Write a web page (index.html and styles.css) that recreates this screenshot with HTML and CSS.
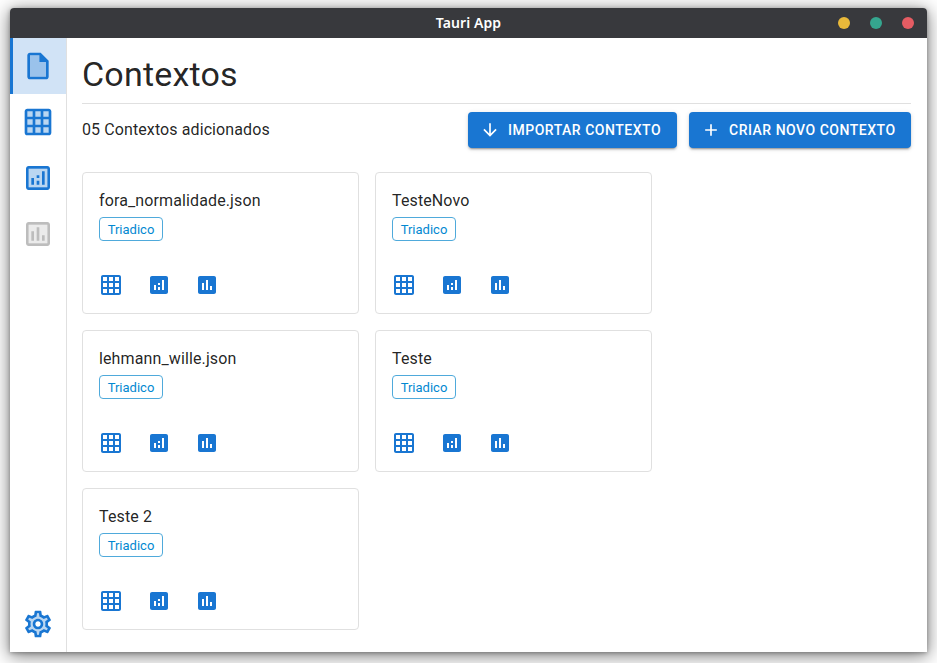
FILE: index.html
```html
<!DOCTYPE html>
<html lang="pt">
<head>
<meta charset="utf-8">
<title>Tauri App</title>
<link rel="stylesheet" href="styles.css">
</head>
<body>
<svg class="defs" width="0" height="0">
  <symbol id="grid" viewBox="0 0 24 24"><path d="M20 2H4c-1.100 0-2 .9-2 2v16c0 1.100.9 2 2 2h16c1.100 0 2-.9 2-2V4c0-1.100-.9-2-2-2zM8 20H4v-4h4v4zm0-6H4v-4h4v4zm0-6H4V4h4v4zm6 12h-4v-4h4v4zm0-6h-4v-4h4v4zm0-6h-4V4h4v4zm6 12h-4v-4h4v4zm0-6h-4v-4h4v4zm0-6h-4V4h4v4z"/></symbol>
  <symbol id="analytics" viewBox="0 0 24 24"><path d="M19 3H5c-1.100 0-2 .9-2 2v14c0 1.100.9 2 2 2h14c1.100 0 2-.9 2-2V5c0-1.100-.9-2-2-2zM9 17H7v-5h2v5zm4 0h-2v-3h2v3zm0-5h-2v-2h2v2zm4 5h-2V7h2v10z"/></symbol>
  <symbol id="poll" viewBox="0 0 24 24"><path d="M19 3H5c-1.100 0-2 .9-2 2v14c0 1.100.9 2 2 2h14c1.100 0 2-.9 2-2V5c0-1.100-.9-2-2-2zM9 17H7v-7h2v7zm4 0h-2V7h2v10zm4 0h-2v-4h2v4z"/></symbol>
</svg>
<div class="window">
  <header class="titlebar"><span class="title">Tauri App</span><div class="controls"><i class="dot yellow"></i><i class="dot green"></i><i class="dot red"></i></div></header>
  <div class="body">
    <nav class="sidebar">
      <a class="item active"><svg viewBox="0 0 24 24"><path opacity=".3" d="M13 4H6v16h12V9h-5V4z"/><path d="M14 2H6c-1.100 0-2 .9-2 2v16c0 1.100.9 2 2 2h12c1.100 0 2-.9 2-2V8l-6-6zm4 18H6V4h7v5h5v11z"/></svg></a>
      <a class="item"><svg viewBox="0 0 24 24"><path opacity=".3" d="M3 3h18v18H3z"/><use href="#grid"/></svg></a>
      <a class="item"><svg viewBox="0 0 24 24"><path opacity=".3" d="M5 5h14v14H5z"/><path d="M19 3H5c-1.100 0-2 .9-2 2v14c0 1.100.9 2 2 2h14c1.100 0 2-.9 2-2V5c0-1.100-.9-2-2-2zm0 16H5V5h14v14zM7 12h2v5H7zm8-5h2v10h-2zm-4 7h2v3h-2zm0-4h2v2h-2z"/></svg></a>
      <a class="item disabled"><svg viewBox="0 0 24 24"><path opacity=".3" d="M5 5h14v14H5z"/><path d="M19 3H5c-1.100 0-2 .9-2 2v14c0 1.100.9 2 2 2h14c1.100 0 2-.9 2-2V5c0-1.100-.9-2-2-2zm0 16H5V5h14v14zM7 10h2v7H7zm4-3h2v10h-2zm4 6h2v4h-2z"/></svg></a>
      <a class="item settings"><svg viewBox="0 0 24 24"><path opacity=".3" d="M19.280 8.600l-.7-1.210-1.270.51-1.060.43-.91-.7c-.39-.3-.8-.54-1.230-.71l-1.060-.43-.16-1.130L12.700 4h-1.400l-.19 1.350-.16 1.130-1.060.44c-.41.17-.82.41-1.250.73l-.9.68-1.050-.42-1.270-.52-.7 1.210 1.080.84.89.7-.14 1.130c-.03.3-.05.53-.05.73s.02.430.05.73l.14 1.130-.89.7-1.080.84.7 1.210 1.270-.51 1.060-.43.91.7c.39.3.8.54 1.230.71l1.060.43.16 1.130.19 1.360h1.390l.19-1.350.16-1.130 1.060-.43c.41-.17.82-.41 1.250-.73l.9-.68 1.040.42 1.270.51.7-1.210-1.080-.84-.89-.7.14-1.130c.04-.31.05-.52.05-.73 0-.21-.02-.43-.05-.73l-.14-1.130.89-.7 1.100-.84zM12 16c-2.210 0-4-1.790-4-4s1.790-4 4-4 4 1.790 4 4-1.790 4-4 4z"/><path d="M19.430 12.980c.04-.32.07-.64.07-.98s-.03-.66-.07-.98l2.110-1.650c.19-.15.24-.42.12-.64l-2-3.460c-.12-.22-.39-.3-.61-.22l-2.490 1c-.52-.4-1.080-.73-1.690-.98l-.38-2.650C14.460 2.180 14.250 2 14 2h-4c-.25 0-.46.18-.49.42l-.38 2.650c-.61.25-1.170.59-1.690.98l-2.490-1c-.23-.09-.49 0-.61.22l-2 3.460c-.13.22-.07.49.12.64l2.110 1.650c-.04.32-.07.65-.07.98s.03.66.07.98l-2.110 1.650c-.19.15-.24.42-.12.64l2 3.460c.12.22.39.3.61.22l2.490-1c.52.4 1.080.73 1.690.98l.38 2.650c.03.24.24.42.49.42h4c.25 0 .46-.18.49-.42l.38-2.650c.61-.25 1.170-.59 1.690-.98l2.490 1c.23.09.49 0 .61-.22l2-3.460c.12-.22.07-.49-.12-.64l-2.110-1.650zm-1.980-1.710c.04.31.05.52.05.73s-.02.43-.05.73l-.14 1.130.89.7 1.080.84-.7 1.210-1.270-.51-1.040-.42-.9.68c-.43.32-.84.56-1.250.73l-1.060.43-.16 1.130-.2 1.350h-1.400l-.19-1.350-.16-1.130-1.060-.43c-.43-.18-.83-.41-1.230-.71l-.91-.7-1.060.43-1.270.51-.7-1.210 1.080-.84.89-.7-.14-1.130c-.03-.31-.05-.54-.05-.74s.02-.43.05-.73l.14-1.130-.89-.7-1.080-.84.7-1.210 1.270.51 1.040.42.9-.68c.43-.32.84-.56 1.250-.73l1.060-.43.16-1.130.2-1.350h1.390l.19 1.350.16 1.130 1.060.43c.43.18.83.41 1.230.71l.91.7 1.060-.43 1.270-.51.7 1.210-1.070.85-.89.7.14 1.130zM12 8c-2.210 0-4 1.790-4 4s1.790 4 4 4 4-1.790 4-4-1.790-4-4-4zm0 6c-1.100 0-2-.9-2-2s.9-2 2-2 2 .9 2 2-.9 2-2 2z"/></svg></a>
    </nav>
    <main class="content">
      <h1>Contextos</h1>
      <div class="toolbar">
        <p>05 Contextos adicionados</p>
        <div class="actions">
          <button class="import"><svg viewBox="0 0 24 24"><path d="M20 12l-1.410-1.410L13 16.170V4h-2v12.170l-5.580-5.590L4 12l8 8 8-8z"/></svg>Importar contexto</button>
          <button class="create"><svg viewBox="0 0 24 24"><path d="M19 13h-6v6h-2v-6H5v-2h6V5h2v6h6v2z"/></svg>Criar novo contexto</button>
        </div>
      </div>
      <section class="cards">
        <article class="card"><h2>fora_normalidade.json</h2><span class="chip">Triadico</span><div class="links"><svg><use href="#grid"/></svg><svg><use href="#analytics"/></svg><svg><use href="#poll"/></svg></div></article>
        <article class="card"><h2>TesteNovo</h2><span class="chip">Triadico</span><div class="links"><svg><use href="#grid"/></svg><svg><use href="#analytics"/></svg><svg><use href="#poll"/></svg></div></article>
        <article class="card"><h2>lehmann_wille.json</h2><span class="chip">Triadico</span><div class="links"><svg><use href="#grid"/></svg><svg><use href="#analytics"/></svg><svg><use href="#poll"/></svg></div></article>
        <article class="card"><h2>Teste</h2><span class="chip">Triadico</span><div class="links"><svg><use href="#grid"/></svg><svg><use href="#analytics"/></svg><svg><use href="#poll"/></svg></div></article>
        <article class="card"><h2>Teste 2</h2><span class="chip">Triadico</span><div class="links"><svg><use href="#grid"/></svg><svg><use href="#analytics"/></svg><svg><use href="#poll"/></svg></div></article>
      </section>
    </main>
  </div>
</div>
</body>
</html>
```
FILE: styles.css
```css
* { box-sizing: border-box; }
body { margin: 0; height: 663px; padding: 8px 10px 11px; overflow: hidden; background: #fff; font-family: Roboto, sans-serif; color: rgba(0,0,0,.87); }
.defs { position: absolute; }
svg { fill: currentColor; display: block; flex: none; }
h1, h2, p { margin: 0; font-weight: 400; }
.window { height: 644px; display: flex; flex-direction: column; background: #fff; border-radius: 4px 4px 0 0; box-shadow: 0 3px 18px 1px rgba(0,0,0,.5), 0 1px 4px rgba(0,0,0,.3); }
.titlebar { height: 30px; flex: none; display: grid; grid-template-columns: 1fr auto 1fr; align-items: center; background: #38393d; border-radius: 4px 4px 0 0; color: #fff; }
.title { grid-column: 2; font: 600 14px/20px "Noto Sans", sans-serif; letter-spacing: .1px; }
.controls { display: flex; justify-content: flex-end; gap: 20px; padding-right: 13px; }
.dot { width: 12px; height: 12px; border-radius: 50%; }
.yellow { background: #e9b93a; }
.green { background: #35a68f; }
.red { background: #e55c63; }
.body { flex: 1; display: flex; min-height: 0; }
.sidebar { width: 57px; display: flex; flex-direction: column; border-right: 1px solid #e0e0e0; color: #1976d2; }
.item { height: 56px; display: grid; place-items: center; }
.item svg { width: 32px; height: 32px; }
.item.active { background: #d1e3f6; box-shadow: inset 3px 0 #1976d2; }
.disabled { color: #bdbdbd; }
.settings { margin-top: auto; }
.content { flex: 1; padding: 15px 16px 0 15px; }
h1 { height: 51px; font-size: 34px; line-height: 42px; letter-spacing: .2px; border-bottom: 1px solid #e0e0e0; }
.toolbar { margin-top: 8px; height: 36px; display: flex; justify-content: space-between; }
.toolbar p { font-size: 16px; line-height: 35px; letter-spacing: .1px; }
.actions { display: flex; gap: 12px; }
button { height: 36px; border: 0; border-radius: 4px; padding: 0 16px 0 12px; display: flex; align-items: center; gap: 8px; background: #1976d2; color: #fff; font: 500 14px/24px Roboto, sans-serif; letter-spacing: .51px; text-transform: uppercase; white-space: nowrap; box-shadow: 0 3px 1px -2px rgba(0,0,0,.2), 0 2px 2px rgba(0,0,0,.14), 0 1px 5px rgba(0,0,0,.12); }
button svg { width: 20px; height: 20px; }
.import { width: 209px; }
.create { width: 222px; }
.cards { margin-top: 24px; display: grid; grid-template-columns: 277px 277px; gap: 16px; }
.card { height: 142px; padding: 16px; border: 1px solid #e0e0e0; border-radius: 4px; }
h2 { font-size: 16px; line-height: 24px; letter-spacing: .12px; }
.chip { display: block; width: 64px; height: 24px; margin-top: 4px; border: 1px solid #4faadb; border-radius: 4px; color: #0288d1; font-size: 13px; line-height: 23px; text-align: center; }
.links { display: flex; gap: 24px; margin-top: 32px; }
.links svg { width: 24px; height: 24px; color: #1976d2; }
```
